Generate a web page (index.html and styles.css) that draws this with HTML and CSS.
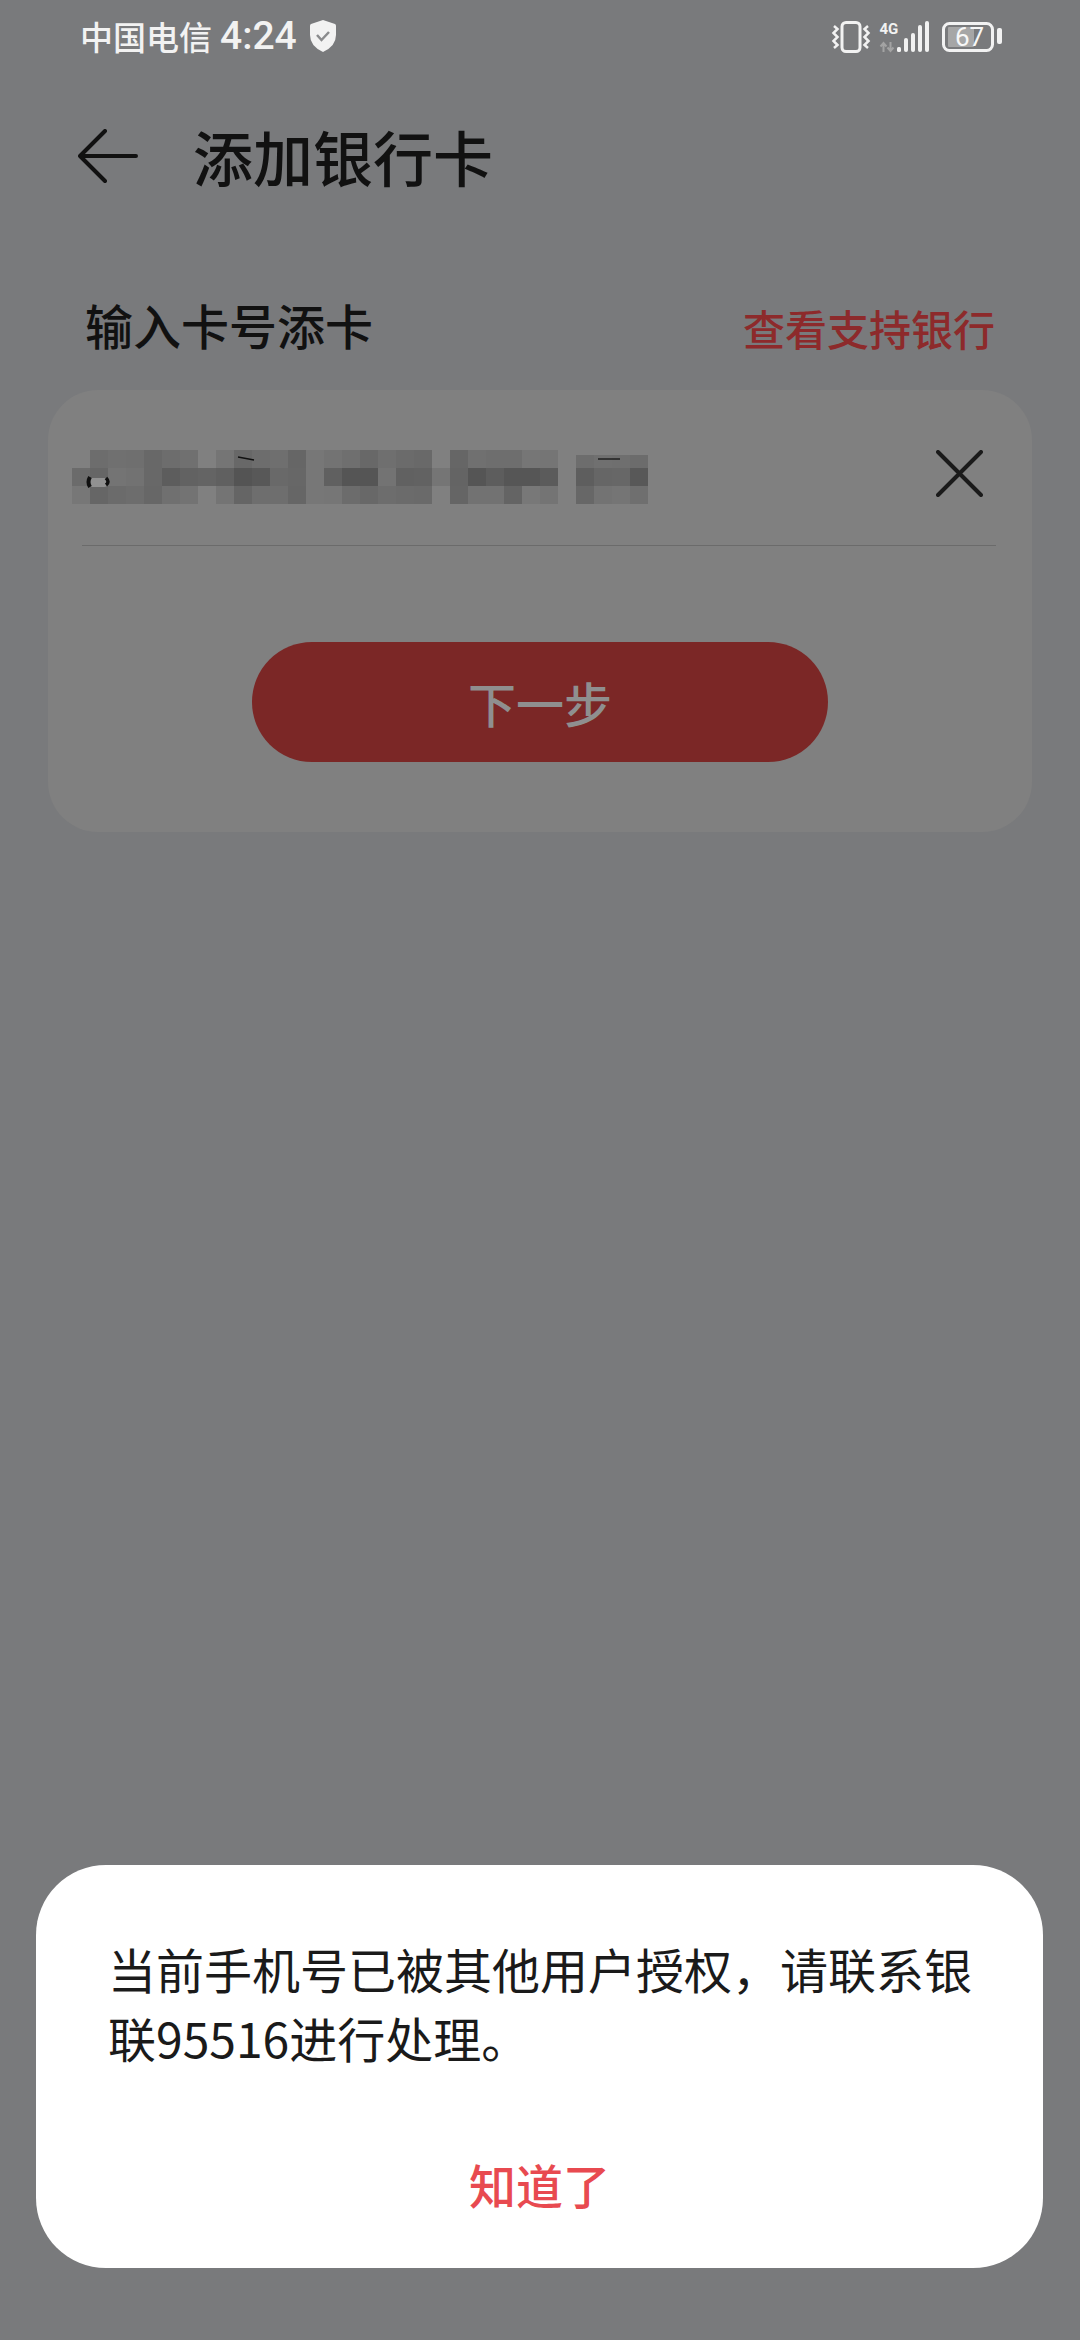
FILE: index.html
```html
<!DOCTYPE html>
<html lang="zh-CN">
<head>
    <meta charset="utf-8">
    <title>添加银行卡</title>
    <meta name="viewport" content="width=device-width, initial-scale=1">
    <link rel="stylesheet" href="styles.css">
</head>
<body>
    <div class="status-bar">
        <div class="status-left">
            <span class="carrier">中国电信</span>
            <span class="clock">4:24</span>
            <svg class="shield" width="26" height="32" viewBox="0 0 26 32">
                <path d="M13 0 L25 4 Q26 4.500 26 6 L26 15 Q26 26 13 32 Q0 26 0 15 L0 6 Q0 4.500 1 4 Z" fill="#f2f2f2"/>
                <path d="M7 15 L11.500 20 L19 12" fill="none" stroke="#8a8b8d" stroke-width="2.500"/>
            </svg>
        </div>
        <svg class="status-icons" width="172" height="40" viewBox="830 16 172 40">
            <!-- vibrate -->
            <rect x="842" y="22.500" width="18" height="29" rx="4" fill="none" stroke="#f2f2f2" stroke-width="3"/>
            <path d="M834 26 L837.500 29 L833.500 33 L837.500 37 L833.500 41 L837.500 45 L834 48" fill="none" stroke="#f2f2f2" stroke-width="2.500"/>
            <path d="M868 26 L864.500 29 L868.500 33 L864.500 37 L868.500 41 L864.500 45 L868 48" fill="none" stroke="#f2f2f2" stroke-width="2.500"/>
            <!-- network -->
            <text class="net-label" x="879.500" y="33.500">4G</text>
            <path d="M883.500 52 L883.500 43 M880.500 46.500 L883.500 43 L886.500 46.500 M890.500 42 L890.500 51 M887.500 47.500 L890.500 51 L893.500 47.500" fill="none" stroke="#a3a3a3" stroke-width="2"/>
            <g fill="#f2f2f2">
                <rect x="897" y="47" width="4" height="5" rx="1.500"/>
                <rect x="904" y="38" width="4" height="14" rx="2"/>
                <rect x="911" y="33" width="4" height="19" rx="2"/>
                <rect x="918" y="25" width="4" height="27" rx="2"/>
                <rect x="925" y="21" width="4" height="31" rx="2"/>
            </g>
            <!-- battery -->
            <rect x="943.500" y="23.500" width="49" height="27" rx="6" fill="none" stroke="#f2f2f2" stroke-width="3"/>
            <rect x="948" y="27" width="26" height="20" rx="1" fill="#a6a6a6"/>
            <text class="battery-label" x="955" y="46">67</text>
            <rect x="997" y="28" width="5" height="16" rx="2" fill="#f2f2f2"/>
        </svg>
    </div>

    <div class="title-bar">
        <svg class="back" width="60" height="56" viewBox="0 0 60 56">
            <path d="M27 2 L2 27 L27 52 M2 27 L58 27" fill="none" stroke="#111" stroke-width="4" stroke-linecap="round" stroke-linejoin="round"/>
        </svg>
        <h1>添加银行卡</h1>
    </div>

    <div class="section-head">
        <span class="section-title">输入卡号添卡</span>
        <span class="section-link">查看支持银行</span>
    </div>

    <div class="card">
        <div class="input-row">
            <!-- card number, pixelated in the source -->
            <svg class="mosaic" width="576" height="54" viewBox="0 0 576 54" shape-rendering="crispEdges">
                <g>
                    <rect x="18" y="0" width="18" height="18" fill="#747474"/><rect x="36" y="0" width="18" height="18" fill="#777"/><rect x="54" y="0" width="18" height="18" fill="#767676"/><rect x="72" y="0" width="18" height="18" fill="#6f6f6f"/><rect x="90" y="0" width="18" height="18" fill="#747474"/><rect x="108" y="0" width="18" height="18" fill="#777"/>
                    <rect x="144" y="0" width="18" height="18" fill="#7c7c7c"/><rect x="162" y="0" width="18" height="18" fill="#6f6f6f"/><rect x="180" y="0" width="18" height="18" fill="#747474"/><rect x="198" y="0" width="18" height="18" fill="#767676"/><rect x="216" y="0" width="18" height="18" fill="#6c6c6c"/><rect x="234" y="0" width="18" height="18" fill="#7f7f7f"/>
                    <rect x="252" y="0" width="18" height="18" fill="#7a7a7a"/><rect x="270" y="0" width="18" height="18" fill="#767676"/><rect x="288" y="0" width="18" height="18" fill="#6f6f6f"/><rect x="306" y="0" width="18" height="18" fill="#767676"/><rect x="324" y="0" width="18" height="18" fill="#727272"/><rect x="342" y="0" width="18" height="18" fill="#707070"/>
                    <rect x="378" y="0" width="18" height="18" fill="#6c6c6c"/><rect x="396" y="0" width="18" height="18" fill="#777"/><rect x="414" y="0" width="18" height="18" fill="#757575"/><rect x="432" y="0" width="18" height="18" fill="#757575"/><rect x="450" y="0" width="18" height="18" fill="#7e7e7e"/><rect x="468" y="0" width="18" height="18" fill="#7c7c7c"/>
                    <rect x="504" y="5" width="18" height="13" fill="#747474"/><rect x="522" y="5" width="18" height="13" fill="#777"/><rect x="540" y="5" width="18" height="13" fill="#767676"/><rect x="558" y="5" width="18" height="13" fill="#737373"/>
                </g>
                <g>
                    <rect x="0" y="18" width="18" height="18" fill="#727272"/><rect x="18" y="18" width="18" height="18" fill="#6c6c6c"/><rect x="36" y="18" width="18" height="18" fill="#7b7b7b"/><rect x="54" y="18" width="18" height="18" fill="#797979"/><rect x="72" y="18" width="18" height="18" fill="#6f6f6f"/><rect x="90" y="18" width="18" height="18" fill="#636363"/><rect x="108" y="18" width="18" height="18" fill="#686868"/>
                    <rect x="126" y="18" width="18" height="18" fill="#6a6a6a"/><rect x="144" y="18" width="18" height="18" fill="#666"/><rect x="162" y="18" width="18" height="18" fill="#595959"/><rect x="180" y="18" width="18" height="18" fill="#5e5e5e"/><rect x="198" y="18" width="18" height="18" fill="#707070"/><rect x="216" y="18" width="18" height="18" fill="#6e6e6e"/><rect x="234" y="18" width="18" height="18" fill="#7f7f7f"/>
                    <rect x="252" y="18" width="18" height="18" fill="#666"/><rect x="270" y="18" width="18" height="18" fill="#5a5a5a"/><rect x="288" y="18" width="18" height="18" fill="#5a5a5a"/><rect x="306" y="18" width="18" height="18" fill="#7a7a7a"/><rect x="324" y="18" width="18" height="18" fill="#676767"/><rect x="342" y="18" width="18" height="18" fill="#686868"/><rect x="360" y="18" width="18" height="18" fill="#7c7c7c"/>
                    <rect x="378" y="18" width="18" height="18" fill="#6a6a6a"/><rect x="396" y="18" width="18" height="18" fill="#5a5a5a"/><rect x="414" y="18" width="18" height="18" fill="#636363"/><rect x="432" y="18" width="18" height="18" fill="#5b5b5b"/><rect x="450" y="18" width="18" height="18" fill="#5b5b5b"/><rect x="468" y="18" width="18" height="18" fill="#616161"/>
                    <rect x="504" y="18" width="18" height="18" fill="#646464"/><rect x="522" y="18" width="18" height="18" fill="#6c6c6c"/><rect x="540" y="18" width="18" height="18" fill="#6e6e6e"/><rect x="558" y="18" width="18" height="18" fill="#5e5e5e"/>
                </g>
                <g>
                    <rect x="0" y="36" width="18" height="18" fill="#7f7f7f"/><rect x="18" y="36" width="18" height="18" fill="#6d6d6d"/><rect x="36" y="36" width="18" height="18" fill="#727272"/><rect x="54" y="36" width="18" height="18" fill="#747474"/><rect x="72" y="36" width="18" height="18" fill="#6e6e6e"/><rect x="90" y="36" width="18" height="18" fill="#777"/><rect x="108" y="36" width="18" height="18" fill="#7a7a7a"/>
                    <rect x="144" y="36" width="18" height="18" fill="#7b7b7b"/><rect x="162" y="36" width="18" height="18" fill="#6b6b6b"/><rect x="180" y="36" width="18" height="18" fill="#757575"/><rect x="198" y="36" width="18" height="18" fill="#757575"/><rect x="216" y="36" width="18" height="18" fill="#6c6c6c"/><rect x="234" y="36" width="18" height="18" fill="#7f7f7f"/>
                    <rect x="252" y="36" width="18" height="18" fill="#7e7e7e"/><rect x="270" y="36" width="18" height="18" fill="#737373"/><rect x="288" y="36" width="18" height="18" fill="#6f6f6f"/><rect x="306" y="36" width="18" height="18" fill="#747474"/><rect x="324" y="36" width="18" height="18" fill="#727272"/><rect x="342" y="36" width="18" height="18" fill="#717171"/>
                    <rect x="378" y="36" width="18" height="18" fill="#6b6b6b"/><rect x="396" y="36" width="18" height="18" fill="#797979"/><rect x="414" y="36" width="18" height="18" fill="#797979"/><rect x="432" y="36" width="18" height="18" fill="#6a6a6a"/><rect x="450" y="36" width="18" height="18" fill="#808080"/><rect x="468" y="36" width="18" height="18" fill="#7b7b7b"/>
                    <rect x="504" y="36" width="18" height="18" fill="#6e6e6e"/><rect x="522" y="36" width="18" height="18" fill="#7a7a7a"/><rect x="540" y="36" width="18" height="18" fill="#7c7c7c"/><rect x="558" y="36" width="18" height="18" fill="#767676"/>
                </g>
                <g shape-rendering="auto">
                    <rect x="16" y="28" width="20" height="9" rx="4" fill="#9a9a9a"/>
                    <path d="M18 27 Q15 32 18 37" fill="none" stroke="#111" stroke-width="4"/>
                    <path d="M34 28 Q38 32 34 35" fill="none" stroke="#111" stroke-width="3.500"/>
                    <path d="M166 7 L182 10" fill="none" stroke="#111" stroke-width="1.500"/>
                    <path d="M526 9 L548 9" fill="none" stroke="#222" stroke-width="1.500"/>
                </g>
            </svg>
            <svg class="clear" width="47" height="47" viewBox="0 0 47 47">
                <path d="M2 2 L45 45 M45 2 L2 45" fill="none" stroke="#1a1a1a" stroke-width="4" stroke-linecap="round"/>
            </svg>
        </div>
        <button class="next" type="button">下一步</button>
    </div>

    <div class="dialog">
        <p class="dialog-text">当前手机号已被其他用户授权，请联系银联95516进行处理。</p>
        <div class="dialog-action">知道了</div>
    </div>
</body>
</html>
```

FILE: styles.css
```css
body {
    margin: 0;
    height: 2340px;
    background: #797a7c;
    font-family: "Noto Sans CJK SC", "Noto Sans", sans-serif;
    display: flex;
    flex-direction: column;
    overflow: hidden;
}
.status-bar {
    height: 72px;
    padding: 0 78px 0 80px;
    display: flex;
    align-items: center;
    justify-content: space-between;
    color: #f2f2f2;
}
.status-left {
    display: flex;
    align-items: center;
}
.carrier {
    font-size: 33px;
    font-weight: 500;
}
.clock {
    font-family: Roboto, sans-serif;
    font-size: 39px;
    font-weight: 500;
    margin-left: 8px;
}
.shield {
    margin-left: 13px;
}
.net-label {
    font-family: Roboto, sans-serif;
    font-size: 15px;
    font-weight: 700;
    fill: #f2f2f2;
}
.battery-label {
    font-family: Roboto, sans-serif;
    font-size: 26px;
    fill: #f7f7f7;
}
.title-bar {
    height: 166px;
    padding-left: 78px;
    display: flex;
    align-items: center;
}
.back {
    flex: none;
    margin-top: 4px;
}
h1 {
    margin: 0 0 0 55px;
    font-size: 60px;
    font-weight: 500;
    color: #111;
}
.section-head {
    height: 60px;
    margin-top: 56px;
    padding: 0 85px;
    display: flex;
    align-items: center;
    justify-content: space-between;
}
.section-title {
    font-size: 48px;
    font-weight: 500;
    color: #111;
}
.section-link {
    margin-top: 6px;
    font-size: 42px;
    font-weight: 500;
    color: #8d2a2b;
}
.card {
    margin: 36px 48px 0;
    padding-bottom: 70px;
    background: #808080;
    border-radius: 50px;
}
.input-row {
    box-sizing: border-box;
    height: 156px;
    margin: 0 36px 0 34px;
    padding: 60px 13px 0 0;
    border-bottom: 1px solid #6b6b6b;
    display: flex;
    align-items: flex-start;
    justify-content: space-between;
}
.mosaic {
    margin-left: -10px;
    filter: brightness(0.94);
}
.next {
    display: block;
    width: 576px;
    height: 120px;
    margin: 96px auto 0;
    padding: 0;
    border: none;
    border-radius: 60px;
    background: #7b2726;
    color: #8f8f8f;
    font-family: inherit;
    font-size: 48px;
    font-weight: 500;
}
.dialog {
    box-sizing: border-box;
    height: 403px;
    margin: auto 37px 72px 36px;
    padding: 69px 60px 0 72px;
    background: #fff;
    border-radius: 70px;
}
.dialog-text {
    margin: 0;
    font-size: 48px;
    line-height: 69px;
    color: #1a1a1a;
}
.dialog-action {
    margin: 77px 0 0 -12px;
    font-size: 47px;
    line-height: 69px;
    font-weight: 500;
    color: #e84a50;
    text-align: center;
}
```
